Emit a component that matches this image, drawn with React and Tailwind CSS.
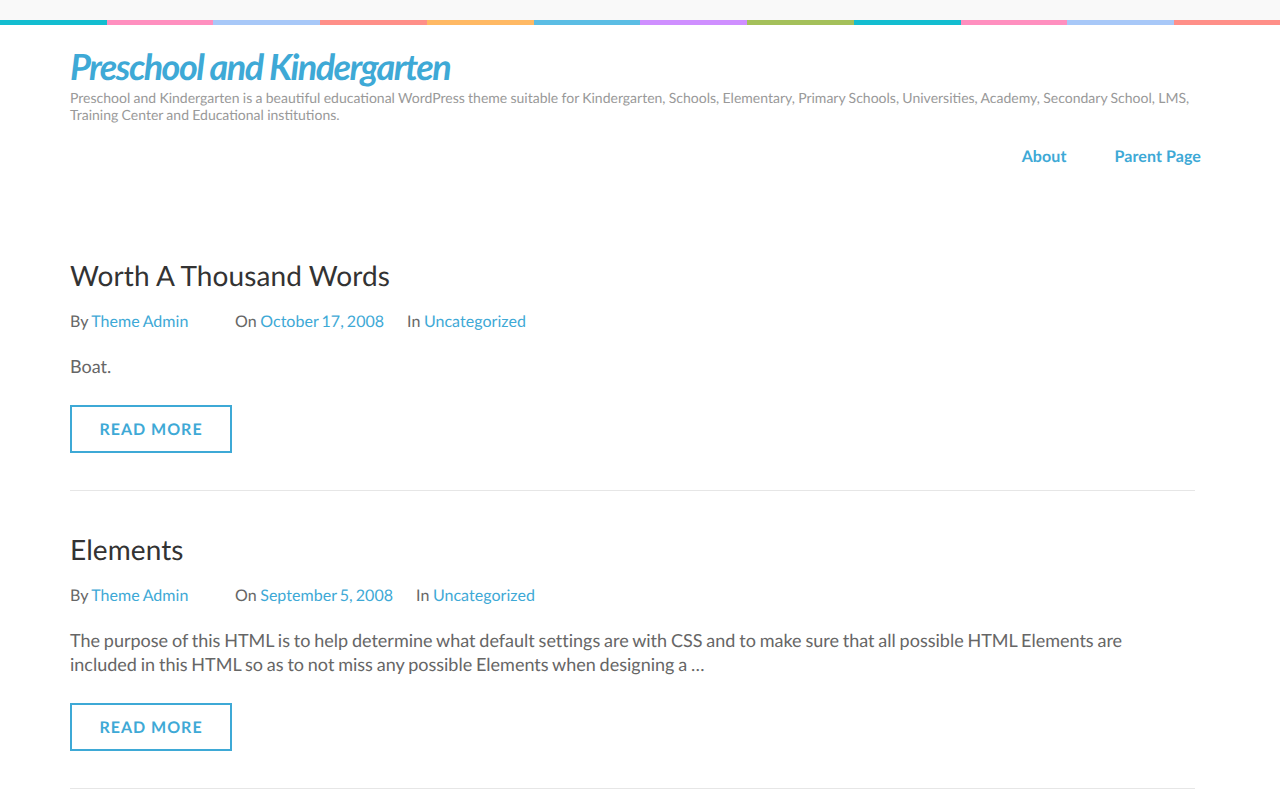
const stripes = ["#13bdd0","#ff8fbf","#a8c8f8","#ff8f88","#ffb964","#5bbde4","#cf8fff","#a4c05a","#13bdd0","#ff8fbf","#a8c8f8","#ff8f88"];
const blue = "text-[#3ea9d6]";

function Post({ title, date, dateGap, children }) {
  return (
    <article className="border-b border-[#e6e6e6] pb-[37px] mb-[40px]">
      <h2 className="text-[28px] leading-[36px] text-[#333333] font-normal tracking-[0.09px]">{title}</h2>
      <div className="flex mt-[17px] text-[16px] leading-[24px] text-[#666666] tracking-[0.04px] [word-spacing:-0.6px]">
        <span className="w-[165px]">By <a className={blue}>Theme Admin</a></span>
        <span className={dateGap}>On <a className={`${blue} [word-spacing:-1.1px]`}>{date}</a></span>
        <span>In <a className={blue}>Uncategorized</a></span>
      </div>
      <p className="mt-[20px] max-w-[1090px] text-[18px] leading-[24px] text-[#666666] [font-variant-ligatures:none] [word-spacing:-0.78px]">{children}</p>
      <a className={`mt-[27px] pt-[2px] flex items-center justify-center w-[162px] h-[48px] border-2 border-[#3ea9d6] ${blue} text-[16px] font-bold tracking-[1px]`}>READ MORE</a>
    </article>
  );
}

export default function App() {
  return (
    <div className="h-[800px] overflow-hidden bg-white font-['Lato',sans-serif] [text-rendering:geometricPrecision]">
      <div className="h-[20px] bg-[#f9f9f9]" />
      <div className="grid grid-cols-[107px_106px_107px_107px_107px_106px_107px_107px_107px_106px_107px_106px] h-[5px]">
        {stripes.map((c, i) => <div key={i} style={{ background: c }} />)}
      </div>
      <header className="pl-[70px] pr-[79px] pt-[18px]">
        <h1 className={`h-[46px] text-[36px] leading-[46px] font-bold italic ${blue} tracking-[-1.55px]`}>Preschool and Kindergarten</h1>
        <p className="text-[14px] leading-[17px] text-[#999999] [word-spacing:-0.3px]">Preschool and Kindergarten is a beautiful educational WordPress theme suitable for Kindergarten, Schools, Elementary, Primary Schools, Universities, Academy, Secondary School, LMS, Training Center and Educational institutions.</p>
        <nav className={`flex justify-end gap-[48px] mt-[22px] text-[16px] leading-[24px] font-bold tracking-[0.1px] ${blue}`}>
          <a>About</a>
          <a>Parent Page</a>
        </nav>
      </header>
      <main className="ml-[70px] w-[1125px] mt-[88px]">
        <Post title="Worth A Thousand Words" date="October 17, 2008" dateGap="w-[172px]">Boat.</Post>
        <Post title="Elements" date="September 5, 2008" dateGap="w-[181px]">The purpose of this HTML is to help determine what default settings are with CSS and to make sure that all possible HTML Elements are included in this HTML so as to not miss any possible Elements when designing a …</Post>
      </main>
    </div>
  );
}
